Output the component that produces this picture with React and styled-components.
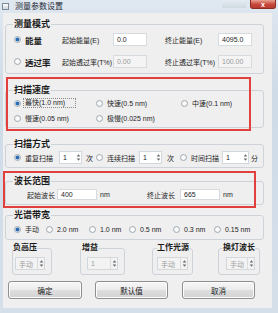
import React from 'react';
import styled, { createGlobalStyle, css } from 'styled-components';

const Global = createGlobalStyle`
  html, body { margin: 0; padding: 0; background: #fff; }
  body { font-family: "Liberation Sans", "Noto Sans CJK SC", sans-serif; color: #1e1e1e; }
`;

const Frame = styled.div`
  position: relative;
  width: 278px;
  height: 313px;
  box-sizing: border-box;
  background: linear-gradient(#dfe7f0, #cfdbe7 30%, #d4dfea);
  display: flex;
  flex-direction: column;
  overflow: hidden;
`;

const TitleBar = styled.div`
  height: 13px;
  flex: none;
  display: flex;
  align-items: center;
  padding-left: 2px;
`;

const AppIcon = styled.span`
  width: 7px;
  height: 7px;
  box-sizing: border-box;
  border: 1px solid #7d8a97;
  background: linear-gradient(#fff, #cdd6df);
`;

const Title = styled.span`
  margin-left: 6px;
  font-size: 8px;
  line-height: 1;
  color: #1f2a36;
`;

const CaptionGhost = styled.span`
  align-self: flex-start;
  margin-left: auto;
  margin-right: 4px;
  width: 24px;
  height: 8px;
  background: linear-gradient(#e6ecf2, #d0d9e2);
`;

const CloseBtn = styled.span`
  align-self: flex-start;
  width: 26px;
  height: 9px;
  margin-right: 2px;
  box-sizing: border-box;
  border: 1px solid #8a2c22;
  border-top: none;
  border-radius: 0 0 3px 3px;
  background: linear-gradient(#e6a191, #c9473a 55%, #b73a2f);
  color: #fff;
  font-size: 7px;
  font-weight: bold;
  line-height: 1;
  display: flex;
  align-items: center;
  justify-content: center;
`;

const Client = styled.div`
  flex: 1;
  margin: 0 6px 5px 3px;
  padding: 0 8px 0 2px;
  background: #efefef;
  display: flex;
  flex-direction: column;
`;

const Group = styled.fieldset`
  margin: ${p => p.$mt}px 0 0;
  padding: ${p => p.$pt}px 6px ${p => p.$pb}px 8px;
  min-width: 0;
  border: 1px solid #cdd3d9;
  border-radius: 3px;
`;

const Legend = styled.legend`
  padding: 0 1px;
  margin-left: -1px;
  font-size: 9px;
  line-height: 10px;
  font-weight: bold;
  color: #1a1a1a;
`;

const Dot = styled.span`
  flex: none;
  width: 7px;
  height: 7px;
  box-sizing: border-box;
  border-radius: 50%;
  border: 1px solid #a3abb3;
  background: radial-gradient(circle, #ffffff 30%, #e2e5e8);
  ${p => p.$on && css`
    background: radial-gradient(circle, #2e6bb5 0 1.6px, #cfe0f2 2.2px, #fff);
  `}
`;

const RadioItem = styled.label`
  display: flex;
  align-items: center;
  gap: 4px;
  height: 10px;
  font-size: ${p => (p.$big ? 8.5 : 7)}px;
  font-weight: ${p => (p.$big ? 'bold' : 'normal')};
  white-space: nowrap;
  width: ${p => (p.$w ? `${p.$w}px` : 'auto')};
  flex: none;
`;

const Focus = styled.span`
  margin-left: -2px;
  width: 53px;
  height: 10px;
  box-sizing: border-box;
  border: 1px dotted #8a8a8a;
  padding-left: 1px;
  line-height: 8px;
`;

const Text = styled.span`
  font-size: 7px;
  white-space: nowrap;
  width: ${p => (p.$w ? `${p.$w}px` : 'auto')};
  margin-left: ${p => p.$ml || 0}px;
  text-align: ${p => p.$align || 'left'};
  flex: none;
`;

const Field = styled.div`
  box-sizing: border-box;
  width: ${p => p.$w}px;
  height: ${p => p.$h || 13}px;
  margin-left: ${p => p.$ml || 0}px;
  border: 1px solid #d6dbe0;
  background: ${p => (p.$off ? '#f4f4f4' : '#fff')};
  color: ${p => (p.$off ? '#9a9a9a' : '#1e1e1e')};
  font-size: 7px;
  padding-left: 3px;
  display: flex;
  align-items: center;
  flex: none;
`;

const EnergyRow = styled.div`
  display: grid;
  grid-template-columns: 48px 51px 34px 18px 53px 34px;
  align-items: center;
  height: 13px;
  margin-top: ${p => p.$mt || 0}px;
`;

const SpeedGrid = styled.div`
  display: grid;
  grid-template-columns: 82px 85px 1fr;
  row-gap: 5px;
`;

const ScanRow = styled.div`
  display: grid;
  grid-template-columns: 82px 84px 1fr;
  height: 13px;
`;

const Cell = styled.div`
  display: flex;
  align-items: center;
`;

const Line = styled.div`
  display: flex;
  align-items: center;
  height: ${p => p.$h}px;
`;

const SpinBox = styled.div`
  box-sizing: border-box;
  display: flex;
  width: ${p => p.$w}px;
  height: 13px;
  margin-left: ${p => p.$ml || 0}px;
  border: 1px solid #d3d8dd;
  background: ${p => (p.$off ? '#f3f3f3' : '#fff')};
  flex: none;
`;

const SpinValue = styled.span`
  flex: 1;
  font-size: 7px;
  padding-left: 3px;
  display: flex;
  align-items: center;
  color: ${p => (p.$off ? '#9c9c9c' : '#1e1e1e')};
`;

const SpinArrows = styled.span`
  width: 6px;
  display: flex;
  align-items: center;
  justify-content: center;
  border-left: 1px solid ${p => (p.$off ? '#dcdcdc' : 'transparent')};
`;

const SmallRow = styled.div`
  display: flex;
  margin-top: 3px;
  padding-left: 7px;
`;

const SmallGroup = styled.fieldset`
  margin: 0 0 0 ${p => p.$ml || 0}px;
  padding: 4px 0 4px;
  width: ${p => p.$w}px;
  box-sizing: border-box;
  min-width: 0;
  border: 1px solid #cdd3d9;
  border-radius: 3px;
`;

const SmallLegend = styled.legend`
  padding: 0;
  margin-left: ${p => p.$ml}px;
  font-size: 8px;
  line-height: 10px;
  font-weight: bold;
  color: #1a1a1a;
`;

const ButtonRow = styled.div`
  display: flex;
  margin-top: 6px;
  padding-left: 3px;
`;

const Button = styled.button`
  width: ${p => p.$w}px;
  height: 18px;
  margin: 0 0 0 ${p => p.$ml || 0}px;
  padding: 0;
  border: 1px solid #8f8f8f;
  border-radius: 3px;
  background: linear-gradient(#f7f7f7, #ececec 48%, #dedede 52%, #d2d2d2);
  box-shadow: inset 0 0 0 1px #fbfbfb;
  font-family: inherit;
  font-size: 7.5px;
  color: #222;
`;

const RedMark = styled.div`
  position: absolute;
  left: ${p => p.$x}px;
  top: ${p => p.$y}px;
  width: ${p => p.$w}px;
  height: ${p => p.$h}px;
  box-sizing: border-box;
  border: 2px solid #e2403c;
  pointer-events: none;
`;

function Arrows() {
  return (
    <svg width="5" height="9" viewBox="0 0 5 9">
      <path d="M2.5 1.2 L4.3 3.6 H0.7Z M2.5 7.8 L4.3 5.4 H0.7Z" fill="#6a6a6a" />
    </svg>
  );
}

function Spin({ value, w, ml, off }) {
  return (
    <SpinBox $w={w} $ml={ml} $off={off}>
      <SpinValue $off={off}>{value}</SpinValue>
      <SpinArrows $off={off}><Arrows /></SpinArrows>
    </SpinBox>
  );
}

function Radio({ on, children, ...rest }) {
  return (
    <RadioItem {...rest}>
      <Dot $on={on} />
      {children}
    </RadioItem>
  );
}

const bandwidths = [
  { label: '手动', w: 32, on: true },
  { label: '2.0 nm', w: 43 },
  { label: '1.0 nm', w: 40 },
  { label: '0.5 nm', w: 44 },
  { label: '0.3 nm', w: 41 },
  { label: '0.15 nm' },
];

const smallGroups = [
  { title: '负高压', w: 40, ml: 0, lx: 0, value: '手动', sw: 30, sml: 2 },
  { title: '增益', w: 45, ml: 28, lx: 1, value: '1', sw: 31, sml: 6 },
  { title: '工作光源', w: 41, ml: 27, lx: 4, value: '手动', sw: 31, sml: 4 },
  { title: '换灯波长', w: 42, ml: 25, lx: 4, value: '手动', sw: 29, sml: 7 },
];

export default function App() {
  return (
    <Frame>
      <Global />
      <TitleBar>
        <AppIcon />
        <Title>测量参数设置</Title>
        <CaptionGhost />
        <CloseBtn>x</CloseBtn>
      </TitleBar>
      <Client>
        <Group $mt={6} $pt={4} $pb={5}>
          <Legend>测量模式</Legend>
          <EnergyRow>
            <Radio on $big>能量</Radio>
            <Text>起始能量(E)</Text>
            <Field $w={34}>0.0</Field>
            <span />
            <Text>终止能量(E)</Text>
            <Field $w={34}>4095.0</Field>
          </EnergyRow>
          <EnergyRow $mt={9}>
            <Radio $big>透过率</Radio>
            <Text>起始透过率(T%)</Text>
            <Field $w={34} $off>0.00</Field>
            <span />
            <Text>终止透过率(T%)</Text>
            <Field $w={34} $off>100.00</Field>
          </EnergyRow>
        </Group>

        <Group $mt={11} $pt={3} $pb={4}>
          <Legend>扫描速度</Legend>
          <SpeedGrid>
            <Radio on><Focus>最快(1.0 nm)</Focus></Radio>
            <Radio>快速(0.5 nm)</Radio>
            <Radio>中速(0.1 nm)</Radio>
            <Radio>慢速(0.05 nm)</Radio>
            <Radio>极慢(0.025 nm)</Radio>
          </SpeedGrid>
        </Group>

        <Group $mt={11} $pt={2} $pb={3}>
          <Legend>扫描方式</Legend>
          <ScanRow>
            <Cell>
              <Radio on $w={45}>重复扫描</Radio>
              <Spin value="1" w={23} />
              <Text $ml={4}>次</Text>
            </Cell>
            <Cell>
              <Radio $w={43}>连续扫描</Radio>
              <Spin value="1" w={23} />
              <Text $ml={5}>次</Text>
            </Cell>
            <Cell>
              <Radio $w={42}>时间扫描</Radio>
              <Spin value="1" w={27} />
              <Text $ml={2}>分</Text>
            </Cell>
          </ScanRow>
        </Group>

        <Group $mt={8} $pt={3} $pb={4}>
          <Legend>波长范围</Legend>
          <Line $h={11}>
            <Text $w={41} $align="right">起始波长</Text>
            <Field $w={40} $h={11} $ml={2}>400</Field>
            <Text $w={20} $ml={3}>nm</Text>
            <Text $w={55} $align="right">终止波长</Text>
            <Field $w={40} $h={11} $ml={5}>665</Field>
            <Text $ml={3}>nm</Text>
          </Line>
        </Group>

        <Group $mt={5} $pt={4} $pb={5}>
          <Legend>光谱带宽</Legend>
          <Line $h={10}>
            {bandwidths.map(b => (
              <Radio key={b.label} on={b.on} $w={b.w}>{b.label}</Radio>
            ))}
          </Line>
        </Group>

        <SmallRow>
          {smallGroups.map(g => (
            <SmallGroup key={g.title} $w={g.w} $ml={g.ml}>
              <SmallLegend $ml={g.lx}>{g.title}</SmallLegend>
              <Spin value={g.value} w={g.sw} ml={g.sml} off />
            </SmallGroup>
          ))}
        </SmallRow>

        <ButtonRow>
          <Button $w={74}>确定</Button>
          <Button $w={73} $ml={13}>默认值</Button>
          <Button $w={73} $ml={14}>取消</Button>
        </ButtonRow>
      </Client>

      <RedMark $x={6} $y={77} $w={245} $h={54} />
      <RedMark $x={3} $y={171} $w={253} $h={37} />
    </Frame>
  );
}
